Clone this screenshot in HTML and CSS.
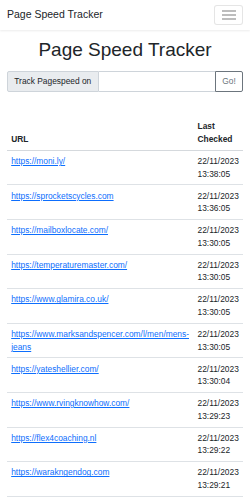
FILE: index.html
```html
<!DOCTYPE html>
<html>
	<head>
		<title>Page Speed Tracker</title>
		<link rel="stylesheet" href="styles.css">
	</head>
	<body>
		<nav class="navbar">
			<a class="brand" href="#">Page Speed Tracker</a>
			<button class="toggler" type="button" aria-label="Toggle navigation">
				<svg width="14" height="10" viewBox="0 0 14 10">
					<path d="M0 1h14M0 5h14M0 9h14" stroke="#7d7d7d" stroke-width="1.2"/>
				</svg>
			</button>
		</nav>

		<main class="container">
			<h1 class="title">Page Speed Tracker</h1>

			<form class="track-form">
				<label class="addon" for="url">Track Pagespeed on</label>
				<input type="text" id="url" name="url">
				<button type="submit" class="go">Go!</button>
			</form>

			<table class="sites">
				<thead>
					<tr>
						<th>URL</th>
						<th class="checked">Last Checked</th>
					</tr>
				</thead>
				<tbody>
					<tr>
						<td><a href="#">https://moni.ly/</a></td>
						<td>22/11/2023 13:38:05</td>
					</tr>
					<tr>
						<td><a href="#">https://sprocketscycles.com</a></td>
						<td>22/11/2023 13:36:05</td>
					</tr>
					<tr>
						<td><a href="#">https://mailboxlocate.com/</a></td>
						<td>22/11/2023 13:30:05</td>
					</tr>
					<tr>
						<td><a href="#">https://temperaturemaster.com/</a></td>
						<td>22/11/2023 13:30:05</td>
					</tr>
					<tr>
						<td><a href="#">https://www.glamira.co.uk/</a></td>
						<td>22/11/2023 13:30:05</td>
					</tr>
					<tr>
						<td><a href="#">https://www.marksandspencer.com/l/men/mens-jeans</a></td>
						<td>22/11/2023 13:30:05</td>
					</tr>
					<tr>
						<td><a href="#">https://yateshellier.com/</a></td>
						<td>22/11/2023 13:30:04</td>
					</tr>
					<tr>
						<td><a href="#">https://www.rvingknowhow.com/</a></td>
						<td>22/11/2023 13:29:23</td>
					</tr>
					<tr>
						<td><a href="#">https://flex4coaching.nl</a></td>
						<td>22/11/2023 13:29:22</td>
					</tr>
					<tr>
						<td><a href="#">https://warakngendog.com</a></td>
						<td>22/11/2023 13:29:21</td>
					</tr>
				</tbody>
			</table>
		</main>
	</body>
</html>
```

FILE: styles.css
```css
body {
	margin: 0;
	font-family: "Liberation Sans", Arial, sans-serif;
	font-size: 8.4px;
	line-height: 1.5;
	color: #212529;
	background: #fff;
}

.navbar {
	display: flex;
	align-items: center;
	justify-content: space-between;
	height: 30px;
	padding: 0 7px;
	box-sizing: border-box;
	background: #fff;
	box-shadow: 0 1px 2px rgba(0, 0, 0, 0.08);
}
.brand {
	font-size: 10.5px;
	color: #212529;
	text-decoration: none;
	margin-top: -1px;
}
.toggler {
	display: flex;
	align-items: center;
	justify-content: center;
	width: 29px;
	height: 20px;
	padding: 0;
	background: #fff;
	border: 1px solid rgba(0, 0, 0, 0.1);
	border-radius: 3px;
}

.container {
	padding: 0 7px;
}
.title {
	margin: 9px 0 9px;
	font-size: 19px;
	font-weight: 400;
	line-height: 1.2;
	text-align: center;
}

.track-form {
	display: flex;
	margin: 0;
}
.track-form .addon,
.track-form input,
.track-form .go {
	font: inherit;
	line-height: 12.6px;
	padding: 3.15px 6.3px;
	border: 1px solid #ced4da;
}
.track-form .addon {
	background: #e9ecef;
	border-radius: 2px 0 0 2px;
	white-space: nowrap;
}
.track-form input {
	flex: 1;
	min-width: 0;
	border-left: none;
	border-right: none;
	outline: none;
}
.track-form .go {
	color: #6c757d;
	background: #fff;
	border-color: #6c757d;
	border-radius: 0 2px 2px 0;
}

.sites {
	width: 100%;
	margin-top: 24.5px;
	border-collapse: collapse;
}
.sites th,
.sites td {
	padding: 4.2px;
	text-align: left;
	vertical-align: top;
	border-bottom: 1px solid #dee2e6;
}
.sites th {
	vertical-align: bottom;
	font-weight: 700;
	border-bottom-color: #d5d9dd;
}
.sites .checked {
	width: 1%;
}
.sites a {
	color: #0d6efd;
}
```
